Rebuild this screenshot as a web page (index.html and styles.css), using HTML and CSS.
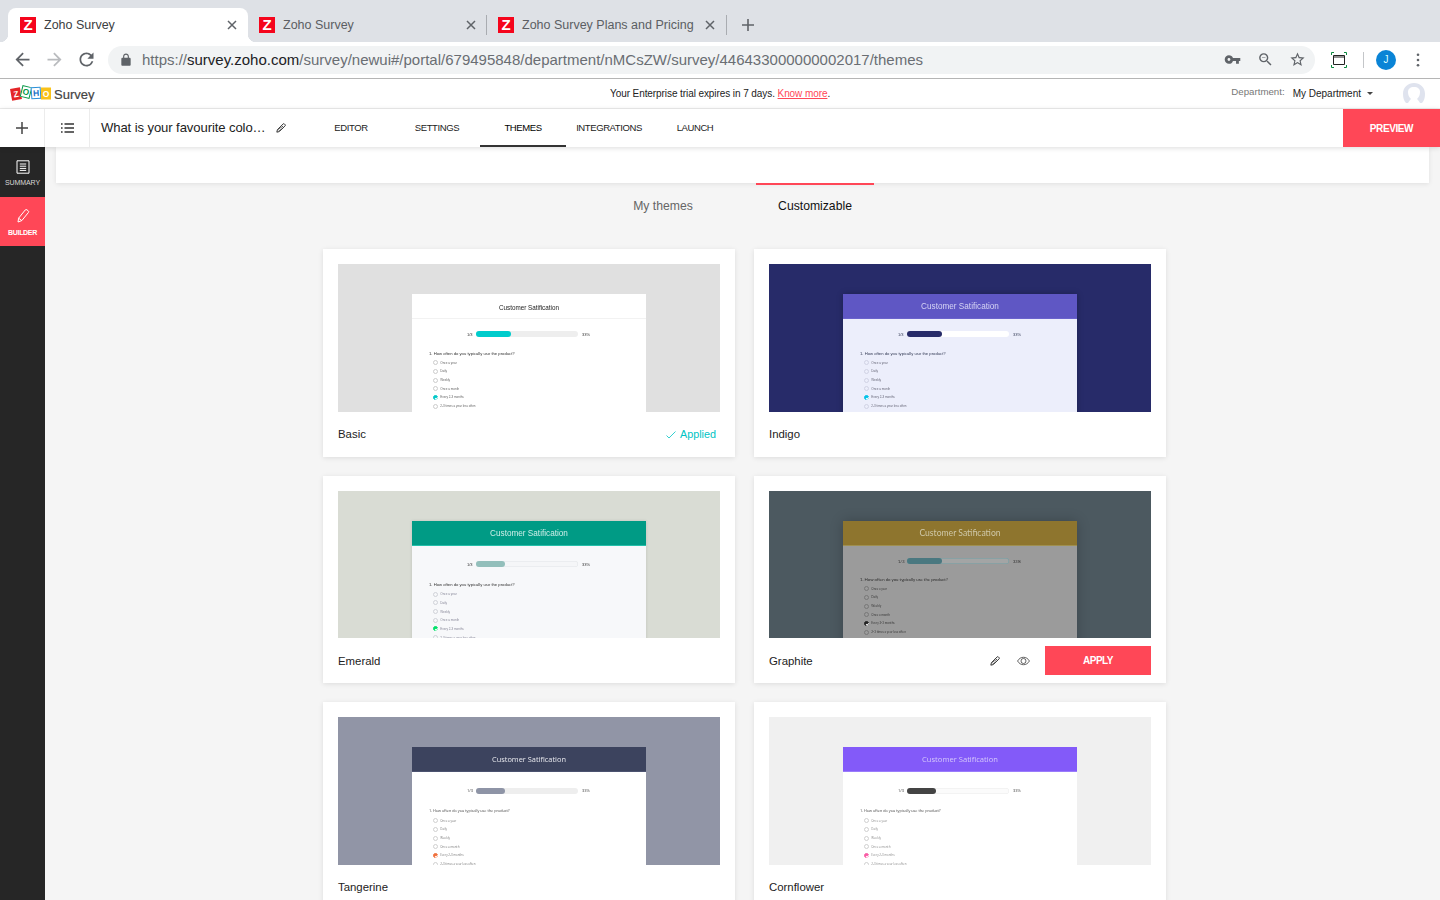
FILE: index.html
```html
<!DOCTYPE html>
<html lang="en">
<head>
<meta charset="utf-8">
<title>Zoho Survey</title>
<link rel="stylesheet" href="styles.css">
</head>
<body>
<div class="page">
  <div class="tabstrip">
    <div class="tab tab-active">
      <span class="favicon">Z</span><span class="tab-title">Zoho Survey</span>
      <svg class="tab-close" viewBox="0 0 10 10"><path d="M1 1l8 8M9 1l-8 8"/></svg>
    </div>
    <div class="tab tab-mid">
      <span class="favicon">Z</span><span class="tab-title">Zoho Survey</span>
      <svg class="tab-close" viewBox="0 0 10 10"><path d="M1 1l8 8M9 1l-8 8"/></svg>
    </div>
    <div class="tab tab-sep">
      <span class="favicon">Z</span><span class="tab-title">Zoho Survey Plans and Pricing</span>
      <svg class="tab-close" viewBox="0 0 10 10"><path d="M1 1l8 8M9 1l-8 8"/></svg>
    </div>
    <svg class="new-tab" viewBox="0 0 12 12"><path d="M6 0v12M0 6h12"/></svg>
  </div>

  <div class="toolbar">
    <svg class="tb-btn" viewBox="0 0 24 24"><path d="M20 11H7.830l5.590-5.590L12 4l-8 8 8 8 1.410-1.410L7.830 13H20v-2z"/></svg>
    <svg class="tb-btn tb-off" viewBox="0 0 24 24"><path d="M4 11h12.170l-5.590-5.590L12 4l8 8-8 8-1.410-1.410L16.170 13H4v-2z"/></svg>
    <svg class="tb-btn" viewBox="0 0 24 24"><path d="M17.650 6.350A7.958 7.958 0 0 0 12 4c-4.420 0-7.990 3.580-7.990 8s3.570 8 7.990 8c3.730 0 6.840-2.550 7.730-6h-2.080A5.990 5.990 0 0 1 12 18c-3.310 0-6-2.690-6-6s2.690-6 6-6c1.660 0 3.140.690 4.220 1.780L13 11h7V4l-2.350 2.350z"/></svg>
    <div class="omnibox">
      <svg class="lock" viewBox="0 0 24 24"><path d="M18 8h-1V6c0-2.760-2.240-5-5-5S7 3.240 7 6v2H6c-1.100 0-2 .9-2 2v10c0 1.100.9 2 2 2h12c1.100 0 2-.9 2-2V10c0-1.100-.9-2-2-2zM9 6c0-1.660 1.340-3 3-3s3 1.340 3 3v2H9V6z"/></svg>
      <span class="url">https://<b class="url-host">survey.zoho.com</b>/survey/newui#/portal/679495848/department/nMCsZW/survey/446433000000002017/themes</span>
      <svg class="omni-icon omni-key" viewBox="0 0 24 24"><path d="M12.650 10A5.990 5.990 0 0 0 7 6c-3.310 0-6 2.690-6 6s2.690 6 6 6a5.990 5.990 0 0 0 5.650-4H17v4h4v-4h2v-4H12.650zM7 14c-1.100 0-2-.9-2-2s.9-2 2-2 2 .9 2 2-.9 2-2 2z"/></svg>
      <svg class="omni-icon" viewBox="0 0 24 24"><path d="M15.500 14h-.79l-.28-.27A6.471 6.471 0 0 0 16 9.500 6.500 6.500 0 1 0 9.500 16c1.610 0 3.090-.59 4.230-1.570l.27.28v.79l5 4.990L20.490 19l-4.990-5zm-6 0C7.010 14 5 11.990 5 9.500S7.010 5 9.500 5 14 7.010 14 9.500 11.990 14 9.500 14zM7 9h5v1H7z"/></svg>
      <svg class="omni-icon" viewBox="0 0 24 24"><path d="M22 9.240l-7.190-.62L12 2 9.190 8.630 2 9.240l5.460 4.730L5.820 21 12 17.270 18.180 21l-1.630-7.030L22 9.240zM12 15.400l-3.760 2.270 1-4.280-3.320-2.880 4.380-.38L12 6.100l1.710 4.040 4.380.38-3.320 2.880 1 4.280L12 15.400z"/></svg>
    </div>
    <svg class="ext" viewBox="0 0 16 16">
      <path class="ext-corner" d="M.5 3V.5H3M13 .5h2.500V3M15.500 13v2.500H13M3 15.500H.5V13"/>
      <path class="ext-win" d="M2.500 3.500h11v9h-11z"/><path class="ext-bar" d="M2.500 5h11"/>
    </svg>
    <span class="tb-divider"></span>
    <span class="profile">J</span>
    <svg class="menu-dots" viewBox="0 0 4 16"><circle cx="2" cy="2" r="1.500"/><circle cx="2" cy="8" r="1.500"/><circle cx="2" cy="14" r="1.500"/></svg>
  </div>

  <header class="app-header">
    <div class="brand">
      <span class="zoho-logo">
        <span class="zl zl-z">Z</span><span class="zl zl-o1">O</span><span class="zl zl-h">H</span><span class="zl zl-o2">O</span>
      </span>
      <span class="brand-name">Survey</span>
    </div>
    <p class="trial">Your Enterprise trial expires in 7 days. <a class="trial-link" href="#">Know more</a>.</p>
    <div class="dept">
      <span class="dept-label">Department:</span>
      <span class="dept-value">My Department</span>
      <span class="caret"></span>
      <svg class="user" viewBox="0 0 22 20"><path d="M11 0c6 0 11 4 11 11 0 4-1 7-3 9h-2c-1-2-2-3-3-4 2-2 3-4 3-7 0-3-2-5-6-5S5 6 5 9c0 3 1 5 3 7-1 1-2 2-3 4H3C1 18 0 15 0 11 0 4 5 0 11 0z"/></svg>
    </div>
  </header>

  <nav class="subnav">
    <div class="sub-cell">
      <svg class="sub-plus" viewBox="0 0 12 12"><path d="M6 0v12M0 6h12"/></svg>
    </div>
    <div class="sub-cell">
      <svg class="sub-list" viewBox="0 0 13 10"><path d="M3.500 1H13M3.500 5H13M3.500 9H13M0 1h1.600M0 5h1.600M0 9h1.600"/></svg>
    </div>
    <div class="survey-title">
      <span class="survey-name">What is your favourite colo…</span>
      <svg class="pencil-sm" viewBox="0 0 12 12"><path d="M1 11l.7-3L8.600 1.100a1 1 0 0 1 1.400 0l.9.9a1 1 0 0 1 0 1.400L4 10.300 1 11zM2.600 7.600l1.800 1.800M4 6.200l1.800 1.800M5.400 4.800l1.800 1.800M6.800 3.400l1.800 1.800"/></svg>
    </div>
    <a class="nav-item" href="#">EDITOR</a>
    <a class="nav-item" href="#">SETTINGS</a>
    <a class="nav-item nav-active" href="#">THEMES</a>
    <a class="nav-item" href="#">INTEGRATIONS</a>
    <a class="nav-item" href="#">LAUNCH</a>
    <a class="preview-btn" href="#">PREVIEW</a>
  </nav>

  <div class="workspace">
    <aside class="sidebar">
      <a class="side-item" href="#">
        <svg class="side-icon" viewBox="0 0 14 14"><path d="M1 .8h12v12.400H1zM3.800 4h6.400M3.800 6.200h6.400M3.800 8.400h6.400M3.800 10.400h6.400"/></svg>
        <span>SUMMARY</span>
      </a>
      <a class="side-item side-active" href="#">
        <svg class="side-icon" viewBox="0 0 14 14"><path d="M2 13l.6-3.800L9.200 1a1.200 1.200 0 0 1 1.700-.2l1.300 1a1.200 1.200 0 0 1 .2 1.700L5.800 11.600 2 13zM2.600 9.200l3.200 2.400"/></svg>
        <span>BUILDER</span>
      </a>
    </aside>

    <main class="content">
      <div class="band"></div>
      <div class="theme-tabs">
        <a class="theme-tab" href="#">My themes</a>
        <a class="theme-tab theme-tab-active" href="#">Customizable</a>
      </div>

      <section class="grid">
        <article class="card t-basic">
          <div class="shot"><div class="mini">
            <div class="mini-head">Customer Satification</div>
            <div class="mini-body">
              <div class="mini-progress"><span class="mini-n">1/3</span><span class="mini-track"><span class="mini-fill"></span></span><span class="mini-n">33%</span></div>
              <p class="mini-q">1. How often do you typically use the product?</p>
              <div class="mini-opts">
                <div class="mini-opt"><i></i>Once a year</div><div class="mini-opt"><i></i>Daily</div><div class="mini-opt"><i></i>Weekly</div><div class="mini-opt"><i></i>Once a month</div><div class="mini-opt"><i class="on"></i>Every 2-3 months</div><div class="mini-opt"><i></i>2-3 times a year less often</div>
              </div>
            </div>
          </div></div>
          <div class="card-foot">
            <span class="card-name">Basic</span>
            <span class="applied"><svg class="applied-check" viewBox="0 0 10 8"><path d="M.5 4.500L3 7l6.500-6.500"/></svg>Applied</span>
          </div>
        </article>

        <article class="card t-indigo">
          <div class="shot"><div class="mini">
            <div class="mini-head">Customer Satification</div>
            <div class="mini-body">
              <div class="mini-progress"><span class="mini-n">1/3</span><span class="mini-track"><span class="mini-fill"></span></span><span class="mini-n">33%</span></div>
              <p class="mini-q">1. How often do you typically use the product?</p>
              <div class="mini-opts">
                <div class="mini-opt"><i></i>Once a year</div><div class="mini-opt"><i></i>Daily</div><div class="mini-opt"><i></i>Weekly</div><div class="mini-opt"><i></i>Once a month</div><div class="mini-opt"><i class="on"></i>Every 2-3 months</div><div class="mini-opt"><i></i>2-3 times a year less often</div>
              </div>
            </div>
          </div></div>
          <div class="card-foot"><span class="card-name">Indigo</span></div>
        </article>

        <article class="card t-emerald">
          <div class="shot"><div class="mini">
            <div class="mini-head">Customer Satification</div>
            <div class="mini-body">
              <div class="mini-progress"><span class="mini-n">1/3</span><span class="mini-track"><span class="mini-fill"></span></span><span class="mini-n">33%</span></div>
              <p class="mini-q">1. How often do you typically use the product?</p>
              <div class="mini-opts">
                <div class="mini-opt"><i></i>Once a year</div><div class="mini-opt"><i></i>Daily</div><div class="mini-opt"><i></i>Weekly</div><div class="mini-opt"><i></i>Once a month</div><div class="mini-opt"><i class="on"></i>Every 2-3 months</div><div class="mini-opt"><i></i>2-3 times a year less often</div>
              </div>
            </div>
          </div></div>
          <div class="card-foot"><span class="card-name">Emerald</span></div>
        </article>

        <article class="card t-graphite">
          <div class="shot"><div class="mini">
            <div class="mini-head">Customer Satification</div>
            <div class="mini-body">
              <div class="mini-progress"><span class="mini-n">1/3</span><span class="mini-track"><span class="mini-fill"></span></span><span class="mini-n">33%</span></div>
              <p class="mini-q">1. How often do you typically use the product?</p>
              <div class="mini-opts">
                <div class="mini-opt"><i></i>Once a year</div><div class="mini-opt"><i></i>Daily</div><div class="mini-opt"><i></i>Weekly</div><div class="mini-opt"><i></i>Once a month</div><div class="mini-opt"><i class="on"></i>Every 2-3 months</div><div class="mini-opt"><i></i>2-3 times a year less often</div>
              </div>
            </div>
          </div></div>
          <div class="card-foot">
            <span class="card-name">Graphite</span>
            <span class="card-actions">
              <svg class="pencil-sm" viewBox="0 0 12 12"><path d="M1 11l.7-3L8.600 1.100a1 1 0 0 1 1.400 0l.9.9a1 1 0 0 1 0 1.400L4 10.300 1 11zM2.600 7.600l1.800 1.800M4 6.200l1.800 1.800M5.400 4.800l1.800 1.800M6.800 3.400l1.800 1.800"/></svg>
              <svg class="eye" viewBox="0 0 14 10"><path d="M.6 5C2.200 2.300 4.400 1 7 1s4.800 1.300 6.400 4C11.800 7.700 9.600 9 7 9S2.200 7.700.6 5z"/><circle cx="7" cy="5" r="2.700"/></svg>
              <a class="apply-btn" href="#">APPLY</a>
            </span>
          </div>
        </article>

        <article class="card t-tangerine">
          <div class="shot"><div class="mini">
            <div class="mini-head">Customer Satification</div>
            <div class="mini-body">
              <div class="mini-progress"><span class="mini-n">1/3</span><span class="mini-track"><span class="mini-fill"></span></span><span class="mini-n">33%</span></div>
              <p class="mini-q">1. How often do you typically use the product?</p>
              <div class="mini-opts">
                <div class="mini-opt"><i></i>Once a year</div><div class="mini-opt"><i></i>Daily</div><div class="mini-opt"><i></i>Weekly</div><div class="mini-opt"><i></i>Once a month</div><div class="mini-opt"><i class="on"></i>Every 2-3 months</div><div class="mini-opt"><i></i>2-3 times a year less often</div>
              </div>
            </div>
          </div></div>
          <div class="card-foot"><span class="card-name">Tangerine</span></div>
        </article>

        <article class="card t-cornflower">
          <div class="shot"><div class="mini">
            <div class="mini-head">Customer Satification</div>
            <div class="mini-body">
              <div class="mini-progress"><span class="mini-n">1/3</span><span class="mini-track"><span class="mini-fill"></span></span><span class="mini-n">33%</span></div>
              <p class="mini-q">1. How often do you typically use the product?</p>
              <div class="mini-opts">
                <div class="mini-opt"><i></i>Once a year</div><div class="mini-opt"><i></i>Daily</div><div class="mini-opt"><i></i>Weekly</div><div class="mini-opt"><i></i>Once a month</div><div class="mini-opt"><i class="on"></i>Every 2-3 months</div><div class="mini-opt"><i></i>2-3 times a year less often</div>
              </div>
            </div>
          </div></div>
          <div class="card-foot"><span class="card-name">Cornflower</span></div>
        </article>
      </section>
    </main>
  </div>
</div>
</body>
</html>
```
FILE: styles.css
```css
* { box-sizing: border-box; }
html, body { margin: 0; height: 100%; overflow: hidden; }
body { font-family: "Liberation Sans", Arial, sans-serif; color: #222; background: #f5f5f5; }
a { color: inherit; text-decoration: none; }
p { margin: 0; }
.page { display: flex; flex-direction: column; width: 1440px; height: 900px; overflow: hidden; }

/* browser tabs */
.tabstrip { display: flex; align-items: center; height: 42px; padding: 8px 0 0 8px; background: #dee1e6; flex: none; }
.tab { position: relative; display: flex; align-items: center; width: 239px; height: 34px; padding: 0 11px; font-size: 12.5px; color: #5b5e63; flex: none; }
.tab:first-child { width: 240px; padding-left: 12px; }
.tab-mid { width: 238px; padding-right: 10px; }
.tab-active { background: #fff; border-radius: 8px 8px 0 0; color: #3c4043; }
.tab-active::before, .tab-active::after { content: ""; position: absolute; bottom: 0; width: 8px; height: 8px; }
.tab-active::before { left: -8px; background: radial-gradient(circle at 0 0, transparent 8px, #fff 8.5px); }
.tab-active::after { right: -8px; background: radial-gradient(circle at 100% 0, transparent 8px, #fff 8.5px); }
.tab-sep { width: 241px; height: 20px; border-left: 1px solid #a9acb1; border-right: 1px solid #a9acb1; }
.favicon { display: flex; align-items: center; justify-content: center; width: 16px; height: 16px; flex: none; margin-right: 8px; background: #f5051c; color: #fff; font: 700 15px/16px "Liberation Sans", sans-serif; }
.tab-title { flex: 1; padding-bottom: 1px; white-space: nowrap; overflow: hidden; }
.tab-close { width: 10px; height: 10px; flex: none; fill: none; stroke: #5f6368; stroke-width: 1.5; }
.new-tab { width: 12px; height: 12px; margin-left: 15px; fill: none; stroke: #5f6368; stroke-width: 1.6; }

/* browser toolbar */
.toolbar { display: flex; align-items: center; height: 37px; padding: 0 0 1px 0.5px; background: #fff; border-bottom: 1px solid #b5b5b5; flex: none; }
.tb-btn { width: 21px; height: 21px; margin-left: 11px; fill: #5f6368; flex: none; }
.tb-off { fill: #b9bbbe; }
.omnibox { display: flex; align-items: center; width: 1207px; height: 28px; margin-left: 11.5px; padding: 0 9px 0 11px; background: #f1f3f4; border-radius: 14px; flex: none; }
.lock { width: 14px; height: 14px; fill: #5f6368; flex: none; }
.url { flex: 1; margin-left: 9px; font-size: 15px; color: #6a6e73; white-space: nowrap; }
.url-host { font-weight: 400; color: #202124; }
.omni-icon { width: 17px; height: 17px; margin-left: 15px; fill: #5f6368; flex: none; }
.omni-key { margin-right: 1px; }
.ext { width: 16px; height: 16px; margin-left: 16px; fill: none; flex: none; }
.ext-corner { stroke: #0b8a3e; stroke-width: 1; }
.ext-win, .ext-bar { stroke: #222; stroke-width: 1; }
.tb-divider { width: 1px; height: 16px; margin-left: 16px; background: #c4c6c9; flex: none; }
.profile { display: flex; align-items: center; justify-content: center; width: 20px; height: 20px; margin-left: 12px; border-radius: 50%; background: #0a84d6; color: #dff; font-size: 10px; flex: none; }
.menu-dots { width: 4px; height: 14px; margin-left: 20px; fill: #5f6368; flex: none; }

/* app header */
.app-header { position: relative; display: flex; align-items: center; justify-content: space-between; height: 30px; padding: 0 15px 1px 11px; background: #fff; border-bottom: 1px solid #ededed; flex: none; }
.brand { display: flex; align-items: center; gap: 3px; padding-top: 3px; }
.zoho-logo { display: flex; width: 40px; height: 15px; align-items: center; margin-top: -3px; }
.zl { display: flex; align-items: center; justify-content: center; width: 10px; height: 12px; font: 700 8.5px/12px "Liberation Sans", sans-serif; color: #fff; }
.zl-z { background: #e42527; transform: translateY(1px) rotate(-10deg); }
.zl-o1 { background: #fff; color: #089949; transform: translateY(-1px) rotate(14deg); border: 1.5px solid #089949; }
.zl-h { background: #fff; color: #1a73c8; transform: rotate(-4deg); border: 1.5px solid #2a8fd8; }
.zl-o2 { background: #f9c21a; color: #fff; transform: translateY(.5px); }
.brand-name { font-size: 13px; color: #444; -webkit-text-stroke: .2px #444; }
.trial { position: absolute; left: 610px; top: 8px; font-size: 10px; letter-spacing: -.08px; line-height: 13px; color: #222; white-space: nowrap; }
.trial-link { color: #ff4757; text-decoration: underline; }
.dept { display: flex; align-items: center; font-size: 10px; }
.dept-label { color: #777; margin-top: -3px; font-size: 9.7px; }
.dept-value { margin-left: 8px; color: #222; }
.caret { width: 0; height: 0; margin-left: 6px; border: 3px solid transparent; border-top: 3.5px solid #444; border-bottom: 0; }
.user { width: 22px; height: 20px; margin-left: 30px; fill: #dfe3ee; }

/* survey sub navigation */
.subnav { position: relative; z-index: 2; display: flex; align-items: stretch; height: 38px; background: #fff; box-shadow: 0 1px 5px rgba(0,0,0,.14); flex: none; }
.sub-cell { display: flex; align-items: center; justify-content: center; width: 45px; border-right: 1px solid #ececec; flex: none; }
.sub-plus { width: 12px; height: 12px; fill: none; stroke: #444; stroke-width: 1.5; }
.sub-list { width: 13px; height: 10px; fill: none; stroke: #333; stroke-width: 1.3; }
.survey-title { display: flex; align-items: center; width: 218px; padding-left: 11px; flex: none; }
.survey-name { width: 175px; padding-bottom: 1px; font-size: 13.1px; letter-spacing: -.1px; color: #222; white-space: nowrap; }
.pencil-sm { width: 10px; height: 10px; fill: none; stroke: #111; stroke-width: 1; flex: none; }
.nav-item { display: flex; align-items: center; justify-content: center; width: 86px; padding-bottom: 1px; font-size: 9.5px; letter-spacing: -.4px; color: #222; flex: none; }
.nav-active { border-bottom: 2px solid #333; padding: 1px 0 0; color: #000; }
.preview-btn { display: flex; align-items: center; justify-content: center; width: 97px; margin-left: auto; background: #ff4757; color: #fff; font-size: 10px; letter-spacing: -.4px; font-weight: 700; }

/* workspace */
.workspace { display: flex; flex: 1; min-height: 0; }
.sidebar { width: 45px; background: #262626; flex: none; }
.side-item { display: flex; flex-direction: column; align-items: center; height: 49px; padding-top: 12px; gap: 5px; background: #262626; color: #d8d8d8; font-size: 7px; letter-spacing: -.1px; }
.side-item:first-child { height: 50px; padding-top: 13px; }
.side-active { gap: 6px; background: #ff4757; color: #fff; font-weight: 700; letter-spacing: -.3px; }
.side-icon { width: 14px; height: 14px; fill: none; stroke: #fff; stroke-width: 1; }
.content { flex: 1; min-width: 0; }
.band { height: 36px; margin: 0 11px; background: #fff; box-shadow: 0 1px 5px rgba(0,0,0,.09); }
.theme-tabs { display: flex; gap: 34px; margin-left: 559px; }
.theme-tab { display: flex; justify-content: center; width: 118px; height: 41px; padding-top: 14px; border-top: 2px solid transparent; font-size: 12.2px; line-height: 14px; color: #666; }
.theme-tab-active { border-top-color: #ff4757; color: #111; }

/* theme grid */
.grid { display: grid; grid-template-columns: 412px 412px; grid-auto-rows: 207.5px; gap: 19px; margin: 25px 0 0 278px; }
.card { display: flex; flex-direction: column; padding: 15px 15px 0; background: #fff; box-shadow: 0 1px 5px rgba(0,0,0,.1); }
.shot { display: flex; justify-content: center; height: 147.5px; overflow: hidden; background: var(--bg); flex: none; }
.card-foot { display: flex; align-items: center; justify-content: space-between; flex: 1; }
.card-name { font-size: 11.4px; color: #222; }
.applied { display: flex; align-items: center; gap: 4px; margin-right: 4px; font-size: 10.8px; color: #00c4c4; }
.applied-check { width: 10px; height: 8px; margin-top: 2px; fill: none; stroke: #00c4c4; stroke-width: .8; }
.card-actions { display: flex; align-items: center; }
.card-actions .pencil-sm { margin-left: 1px; }
.eye { width: 13px; height: 10px; margin-left: 17px; fill: none; stroke: #444; stroke-width: .9; }
.apply-btn { display: flex; align-items: center; justify-content: center; width: 106px; height: 29px; margin-left: 15px; background: #ff4757; color: #fff; font-size: 10px; letter-spacing: -.5px; font-weight: 700; }

/* miniature survey inside a theme */
.mini { width: 234px; height: 200px; margin-top: 30px; background: var(--panel); filter: blur(.25px); box-shadow: var(--shadow, none); flex: none; font-family: var(--font, "Liberation Sans"), sans-serif; }
.mini-head { display: flex; align-items: center; justify-content: center; height: 25px; background: var(--head); border-bottom: 1px solid var(--head-line); color: var(--head-text); font-size: var(--head-size); padding-top: var(--head-pad, 0); }
.mini-body { padding-top: var(--pt); }
.mini-progress { display: flex; justify-content: center; align-items: center; gap: 3px; height: 6px; color: var(--text); font-size: 4px; }
.mini-n { width: 6px; white-space: nowrap; }
.mini-n:last-child { width: 9px; margin-left: 1px; }
.mini-track { display: block; width: 102px; height: 6px; border-radius: 3px; background: var(--track); box-shadow: inset 0 0 0 .5px var(--track-line, transparent); }
.mini-fill { display: block; width: var(--fill); height: 6px; border-radius: 3px; background: var(--fill-c); }
.mini-q { margin: var(--qm) 0 0 17px; height: 5px; font-size: var(--q-size, 4.2px); line-height: 5px; color: var(--text); white-space: nowrap; }
.mini-opts { margin-top: 3px; padding-left: 21px; }
.mini-opt { display: flex; align-items: center; gap: 2.3px; height: 8.67px; font-size: var(--o-size, 3px); color: var(--opt); white-space: nowrap; }
.mini-opt i { position: relative; width: 5px; height: 5px; border: .5px solid var(--radio); border-radius: 50%; flex: none; }
.mini-opt i.on { background: var(--on); border-color: var(--on); }
.mini-opt i.on::after { content: ""; position: absolute; left: .9px; top: .9px; width: 2.2px; height: 1.2px; border-left: .4px solid #fff; border-bottom: .4px solid #fff; transform: rotate(-45deg); }

.t-basic { --bg: #e0e0e0; --panel: #fff; --head: #fff; --head-line: #f2f2f2; --head-text: #222; --head-size: 6.3px; --head-pad: 2px; --pt: 12px; --qm: 13.5px; --text: #333; --opt: #666; --radio: #ccc; --on: #00c8c8; --track: #eee; --fill: 35px; --fill-c: #00cccc; }
.t-indigo { --bg: #272b69; --panel: #eceefb; --head: #5f57c4; --head-line: #6a63cc; --head-text: #d6d4f4; --head-size: 8.2px; --pt: 12px; --qm: 13.5px; --text: #333a55; --opt: #667; --radio: #d0d2e4; --on: #00c2e8; --track: #fff; --fill: 35px; --fill-c: #272b69; --shadow: 0 0 6px rgba(0,0,0,.25); }
.t-emerald { --bg: #d9dcd4; --panel: #f7f8fa; --head: #009b85; --head-line: #24c0aa; --head-text: #cdeee8; --head-size: 8.2px; --head-pad: 2px; --pt: 15.7px; --qm: 14.8px; --text: #333; --opt: #889; --radio: #d0d2d8; --on: #00e06a; --track: #f5f6f8; --track-line: #e2e4e8; --fill: 29px; --fill-c: #93bfbb; --shadow: 0 0 3px rgba(0,0,0,.12); }
.t-graphite { --bg: #4c5960; --panel: #9b9b9b; --head: #8e752e; --head-line: #a09050; --head-text: #cfc8a8; --head-size: 8.6px; --head-pad: 1px; --pt: 12.5px; --qm: 12.5px; --text: #2c2c2c; --opt: #3a3a3a; --radio: #777; --on: #222; --track: #a3a5a5; --track-line: #6f9da3; --fill: 35px; --fill-c: #4a7880; --shadow: 0 0 12px rgba(0,0,0,.22); --font: "Lato"; --q-size: 4.3px; }
.t-tangerine { --bg: #9195a6; --panel: #fff; --head: #3c435e; --head-line: #4c5370; --head-text: #e8e9ee; --head-size: 7.4px; --pt: 15.7px; --qm: 14.8px; --text: #444; --opt: #777; --radio: #d0d0d0; --on: #f0703c; --track: #eee; --fill: 29px; --fill-c: #8e94a6; --font: "Open Sans"; --q-size: 3.75px; --o-size: 2.9px; }
.t-cornflower { --bg: #f0f0f0; --panel: #fff; --head: #835af9; --head-line: #9a7cfb; --head-text: #d6c9fb; --head-size: 7.6px; --pt: 15.7px; --qm: 14.8px; --text: #444; --opt: #888; --radio: #d0d0d0; --on: #f95ca5; --track: #fbfbfb; --track-line: #ececec; --fill: 29px; --fill-c: #444; --font: "Open Sans"; --q-size: 3.75px; --o-size: 2.9px; }
```
